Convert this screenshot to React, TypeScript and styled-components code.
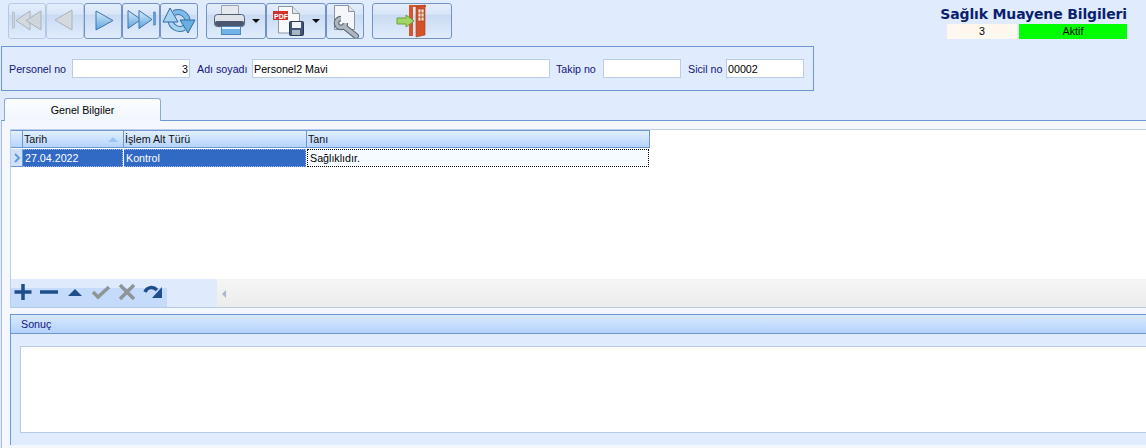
import React from 'react';
import styled, { createGlobalStyle } from 'styled-components';

const GlobalStyle = createGlobalStyle`
  html, body {
    margin: 0;
    padding: 0;
    background: #e0ecfe;
    overflow: hidden;
  }
  * {
    box-sizing: border-box;
  }
`;

const Page = styled.div`
  width: 1146px;
  height: 448px;
  overflow: hidden;
  display: flex;
  flex-direction: column;
  background: #e0ecfe;
  font-family: "Liberation Sans", "Noto Sans", sans-serif;
  font-size: 10.7px;
  color: #000;
`;

const TopBar = styled.div`
  height: 46px;
  flex: none;
  display: flex;
  justify-content: space-between;
  padding: 3px 19px 0 8px;
`;

const Toolbar = styled.div`
  display: flex;
  align-items: flex-start;
`;

const ToolButton = styled.button<{ $w: number; $off?: boolean; $gap?: number; $inner?: number }>`
  width: ${p => p.$w}px;
  height: 36px;
  margin: 0 0 0 ${p => p.$gap || 0}px;
  padding: 0;
  display: flex;
  align-items: center;
  justify-content: center;
  gap: ${p => p.$inner || 0}px;
  border: 1px solid ${p => (p.$off ? '#b5c8e4' : '#7293c2')};
  border-radius: 3px;
  background: linear-gradient(180deg, #e3edfc 0%, #d9e6f8 30%, #c9dbf3 33%, #d3e2f6 60%, #e0ecfd 100%);
`;

const Caret = styled.span`
  width: 0;
  height: 0;
  border-left: 4px solid transparent;
  border-right: 4px solid transparent;
  border-top: 4px solid #111;
`;

const TitleBlock = styled.div`
  width: 186px;
  display: flex;
  flex-direction: column;
  align-items: flex-end;
  margin-top: 1px;
`;

const Title = styled.div`
  width: 190px;
  font-size: 14px;
  line-height: 20px;
  font-weight: 700;
  font-family: "DejaVu Sans", sans-serif;
  color: #0b1f6f;
  white-space: nowrap;
  text-align: right;
  letter-spacing: -0.15px;
`;

const StatusRow = styled.div`
  display: flex;
  gap: 2px;
`;

const StatusCell = styled.div<{ $w: number; $bg: string }>`
  width: ${p => p.$w}px;
  height: 15px;
  line-height: 15px;
  text-align: center;
  background: ${p => p.$bg};
`;

const InfoPanel = styled.div`
  flex: none;
  width: 813px;
  height: 45px;
  margin-left: 1px;
  padding: 0 7px;
  display: flex;
  align-items: center;
  border: 1px solid #6c97d1;
`;

const FieldLabel = styled.label<{ $w: number; $pad?: number }>`
  width: ${p => p.$w}px;
  padding-left: ${p => p.$pad || 0}px;
  color: #14147a;
  white-space: nowrap;
`;

const FieldBox = styled.div<{ $w: number; $right?: boolean }>`
  width: ${p => p.$w}px;
  height: 19px;
  line-height: 18px;
  padding: 0 1px;
  background: #fff;
  border: 1px solid #b9cde8;
  text-align: ${p => (p.$right ? 'right' : 'left')};
  color: #000;
  white-space: nowrap;
`;

const TabStrip = styled.div`
  flex: none;
  height: 29px;
  padding: 6px 0 0 4px;
  display: flex;
  align-items: flex-end;
`;

const Tab = styled.div`
  width: 157px;
  height: 23px;
  line-height: 23px;
  text-align: center;
  border: 1px solid #8eaad2;
  border-bottom: none;
  border-radius: 3px 3px 0 0;
  background: linear-gradient(180deg, #fbfdff 0%, #f1f6fe 100%);
  margin-bottom: -1px;
  position: relative;
  z-index: 1;
`;

const TabBody = styled.div`
  flex: 1;
  margin-left: 1px;
  padding: 8px 0 0 8px;
  border-top: 1px solid #6c97d1;
  border-left: 1px solid #a9bce0;
  background: #f4f8fe;
  display: flex;
  flex-direction: column;
`;

const GridBox = styled.div`
  flex: none;
  height: 179px;
  background: #fff;
  border-top: 1px solid #bccde5;
  border-left: 1px solid #bccde5;
  border-bottom: 1px solid #b5c9e5;
  display: flex;
  flex-direction: column;
`;

const GridRows = styled.div`
  flex: 1;
`;

const GridRow = styled.div`
  display: flex;
  height: 18px;
`;

const DataRow = styled(GridRow)`
  margin-top: 1px;
`;

const Selector = styled.div<{ $head?: boolean }>`
  width: 12px;
  flex: none;
  display: flex;
  align-items: center;
  justify-content: center;
  border-right: 1px solid #6c97d1;
  border-bottom: 1px solid #6c97d1;
  background: ${p => (p.$head ? 'linear-gradient(180deg, #e2efff, #b5d4fd)' : '#cfe0f8')};
  border-top: ${p => (p.$head ? '1px solid #6c97d1' : 'none')};
`;

const HeadCell = styled.div<{ $w: number }>`
  width: ${p => p.$w}px;
  flex: none;
  display: flex;
  align-items: center;
  justify-content: space-between;
  padding: 0 5px 0 1px;
  border: 1px solid #6c97d1;
  border-left: none;
  background: linear-gradient(180deg, #e2efff, #b5d4fd);
  color: #111;
  line-height: 16px;
`;

const Cell = styled.div<{ $w: number; $focus?: boolean }>`
  width: ${p => p.$w}px;
  flex: none;
  padding: 0 1px 0 2px;
  margin-right: 1px;
  line-height: 16px;
  color: ${p => (p.$focus ? '#000' : '#fff')};
  background: ${p => (p.$focus ? '#f6fbff' : '#316ac5')};
  border: 1px dotted ${p => (p.$focus ? '#000' : '#9db8e6')};
  border-left-style: ${p => (p.$focus ? 'dotted' : 'none')};
`;

const SortArrow = styled.span`
  width: 0;
  height: 0;
  border-left: 5px solid transparent;
  border-right: 5px solid transparent;
  border-bottom: 5px solid #9cc4f2;
`;

const GridFooter = styled.div`
  flex: none;
  height: 28px;
  display: flex;
`;

const Navigator = styled.div`
  width: 156px;
  display: flex;
  align-items: center;
  padding: 0 0 3px 2px;
  gap: 6px;
  background: linear-gradient(180deg, #dfebfd 0, #dfebfd 9px, #c4dbfb 9px, #c4dbfb 100%);
`;

const FooterGap = styled.div`
  width: 50px;
  background: #dfebfd;
`;

const ScrollTrack = styled.div`
  flex: 1;
  padding-left: 5px;
  display: flex;
  align-items: center;
  border-top: 1px solid #f4f4f4;
  background: linear-gradient(180deg, #f5f5f5, #ececec);
`;

const ScrollArrow = styled.span`
  width: 0;
  height: 0;
  border-top: 4px solid transparent;
  border-bottom: 4px solid transparent;
  border-right: 4px solid #a8b8cf;
`;

const ResultPanel = styled.section`
  flex: none;
  margin-top: 6px;
  height: 131px;
  display: flex;
  flex-direction: column;
  background: #e0ecfe;
  border-top: 1px solid #6c97d1;
  border-left: 1px solid #6c9ae0;
`;

const ResultHead = styled.div`
  height: 19px;
  flex: none;
  padding-left: 10px;
  line-height: 18px;
  color: #14147a;
  background: linear-gradient(180deg, #dbeafe, #b3d2fc);
  border-bottom: 1px solid #6c97d1;
`;

const ResultBody = styled.div`
  flex: 1;
  padding: 12px 0 12px 9px;
`;

const ResultText = styled.div`
  height: 100%;
  background: #fff;
  border-top: 1px solid #b5c9e5;
  border-left: 1px solid #b5c9e5;
  border-bottom: 1px solid #b5c9e5;
`;

const FirstIcon = () => (
  <svg width="30" height="30" viewBox="0 0 30 30">
    <rect x="0.500" y="6" width="2" height="16" fill="#ccd2d8" stroke="#aeb6bd" strokeWidth="0.6" />
    <path d="M18 5v19L4 14.500z" fill="#d4d9de" stroke="#aab2ba" />
    <path d="M29 5v19L14 14.500z" fill="#cfd5da" stroke="#aab2ba" />
  </svg>
);

const PrevIcon = () => (
  <svg width="30" height="30" viewBox="0 0 30 30">
    <path d="M22 4v20L5 14z" fill="#d4d9de" stroke="#aab2ba" />
  </svg>
);

const NextIcon = () => (
  <svg width="30" height="30" viewBox="0 0 30 30">
    <defs>
      <linearGradient id="nav" x1="0" y1="0" x2="0" y2="1">
        <stop offset="0" stopColor="#d7ecfb" />
        <stop offset="1" stopColor="#5ea4dc" />
      </linearGradient>
    </defs>
    <path d="M8 5v19L25 14.500z" fill="url(#nav)" stroke="#3f74ad" />
  </svg>
);

const LastIcon = () => (
  <svg width="32" height="30" viewBox="0 0 32 30">
    <path d="M3 4.500v18L16 13.500z" fill="url(#nav)" stroke="#3f74ad" />
    <path d="M14 4.500v18L27 13.500z" fill="url(#nav)" stroke="#3f74ad" />
    <rect x="28.500" y="6" width="2" height="13" fill="#5ea4dc" stroke="#3f74ad" strokeWidth="0.5" />
  </svg>
);

const RefreshIcon = () => (
  <svg width="34" height="34" viewBox="0 0 34 34">
    <path d="M8.500 17A9.500 9.500 0 0 0 22 24" fill="none" stroke="#3b76ad" strokeWidth="6" />
    <path d="M8.500 17A9.500 9.500 0 0 0 22 24" fill="none" stroke="#a7d3f0" strokeWidth="4" />
    <path d="M25.500 16A9.500 9.500 0 0 0 12 9" fill="none" stroke="#3b76ad" strokeWidth="6" />
    <path d="M25.500 16A9.500 9.500 0 0 0 12 9" fill="none" stroke="#7dbce8" strokeWidth="4" />
    <path d="M8 4L1 18h15z" fill="#a7d3f0" stroke="#2f6aa3" />
    <path d="M26 29l-8-13h15z" fill="#68aee0" stroke="#2f6aa3" />
  </svg>
);

const PrinterIcon = () => (
  <svg width="35" height="32" viewBox="0 0 35 32">
    <path d="M9.500 0.500h17v12h-17z" fill="#e6e9ee" stroke="#9aa2ad" />
    <rect x="2.500" y="9.500" width="30" height="12" rx="3" fill="#dfe3e9" stroke="#4f5d72" />
    <rect x="3" y="16" width="29" height="5" rx="2" fill="#4a576e" />
    <rect x="9.500" y="21.500" width="19" height="8" fill="#6fb3e8" stroke="#4d86bb" />
    <rect x="10" y="22" width="18" height="2" fill="#e6f2fb" />
  </svg>
);

const PdfIcon = () => (
  <svg width="32" height="32" viewBox="0 0 32 32">
    <path d="M6.500 1.500h14l7 7v19.500h-21z" fill="#f8f9fb" stroke="#8a94a3" />
    <path d="M20.500 1.500v7h7" fill="#dfe4ea" stroke="#8a94a3" />
    <rect x="1" y="6" width="15" height="9" fill="#d0322c" />
    <text x="2" y="13.500" fontSize="7" fontWeight="700" fontFamily="Liberation Sans" fill="#fff">PDF</text>
    <rect x="17.500" y="16.500" width="14" height="14" rx="1" fill="#3f5477" stroke="#2a3a55" />
    <rect x="20" y="17" width="9" height="6" fill="#eef1f5" />
    <rect x="20" y="25" width="8" height="5" fill="#a9b4c5" />
  </svg>
);

const ToolsIcon = () => (
  <svg width="30" height="34" viewBox="0 0 30 34">
    <path d="M4.500 1.500h14l6 6v18h-20z" fill="#f4f6f9" stroke="#8a94a3" />
    <path d="M18.500 1.500v6h6" fill="#dfe4ea" stroke="#8a94a3" />
    <path d="M14 22.500L26 32" stroke="#59636f" strokeWidth="6" strokeLinecap="round" />
    <path d="M11 14.500A4.500 4.500 0 1 0 15.500 19" fill="none" stroke="#59636f" strokeWidth="5.500" />
    <path d="M11 14.500A4.500 4.500 0 1 0 15.500 19" fill="none" stroke="#aeb6c0" strokeWidth="3.500" />
    <path d="M14 22.500L26 32" stroke="#aeb6c0" strokeWidth="4" strokeLinecap="round" />
  </svg>
);

const ExitIcon = () => (
  <svg width="34" height="34" viewBox="0 0 34 34">
    <path d="M14 1h17v2H18v29h-4z" fill="#d4562a" />
    <path d="M21 3l9-2v30l-9 2z" fill="#d4512a" stroke="#a83a1b" strokeWidth="0.6" />
    <rect x="23" y="5" width="6" height="12" fill="#f3e3c4" stroke="#a83a1b" strokeWidth="0.6" />
    <path d="M23 9h6M23 13h6M26 5v12" stroke="#a83a1b" strokeWidth="0.8" />
    <path d="M2 14h9v-3l8 6-8 6v-3H2z" fill="#a0d662" stroke="#6ea03a" />
  </svg>
);

const PlusIcon = () => (
  <svg width="20" height="18" viewBox="0 0 20 18">
    <path d="M1.500 9h17M10 1v16" stroke="#1f4e8c" strokeWidth="3.500" />
  </svg>
);

const MinusIcon = () => (
  <svg width="20" height="18" viewBox="0 0 20 18">
    <path d="M1 9h18" stroke="#1f4e8c" strokeWidth="3.500" />
  </svg>
);

const UpIcon = () => (
  <svg width="20" height="18" viewBox="0 0 20 18">
    <path d="M3 13l7-7 7 7z" fill="#1f4e8c" />
  </svg>
);

const CheckIcon = () => (
  <svg width="20" height="18" viewBox="0 0 20 18">
    <path d="M2 9l5 5L18 4" fill="none" stroke="#8f9498" strokeWidth="3.500" />
  </svg>
);

const CrossIcon = () => (
  <svg width="20" height="18" viewBox="0 0 20 18">
    <path d="M3 2l14 14M17 2L3 16" stroke="#8f9498" strokeWidth="3.500" />
  </svg>
);

const RedoIcon = () => (
  <svg width="20" height="18" viewBox="0 0 20 18">
    <path d="M2 9c2-5 8-6 12-2" fill="none" stroke="#1f4e8c" strokeWidth="3.500" />
    <path d="M19 4v11H9z" fill="#1f4e8c" />
  </svg>
);

const RowPointer = () => (
  <svg width="8" height="10" viewBox="0 0 8 10">
    <path d="M2 1l4 4-4 4" fill="none" stroke="#5f9bd8" strokeWidth="2" />
  </svg>
);

export default function App() {
  return (
    <Page>
      <GlobalStyle />
      <TopBar>
        <Toolbar>
          <ToolButton $w={38} $off><FirstIcon /></ToolButton>
          <ToolButton $w={38} $off><PrevIcon /></ToolButton>
          <ToolButton $w={38}><NextIcon /></ToolButton>
          <ToolButton $w={38}><LastIcon /></ToolButton>
          <ToolButton $w={38}><RefreshIcon /></ToolButton>
          <ToolButton $w={60} $gap={8} $inner={5}><PrinterIcon /><Caret /></ToolButton>
          <ToolButton $w={60} $inner={8}><PdfIcon /><Caret /></ToolButton>
          <ToolButton $w={38}><ToolsIcon /></ToolButton>
          <ToolButton $w={80} $gap={8}><ExitIcon /></ToolButton>
        </Toolbar>
        <TitleBlock>
          <Title>Sağlık Muayene Bilgileri</Title>
          <StatusRow>
            <StatusCell $w={70} $bg="#fff8ee">3</StatusCell>
            <StatusCell $w={108} $bg="#00ff00">Aktif</StatusCell>
          </StatusRow>
        </TitleBlock>
      </TopBar>

      <InfoPanel>
        <FieldLabel $w={63}>Personel no</FieldLabel>
        <FieldBox $w={118} $right>3</FieldBox>
        <FieldLabel $w={62} $pad={7}>Adı soyadı</FieldLabel>
        <FieldBox $w={298}>Personel2 Mavi</FieldBox>
        <FieldLabel $w={53} $pad={6}>Takip no</FieldLabel>
        <FieldBox $w={78} />
        <FieldLabel $w={45} $pad={7}>Sicil no</FieldLabel>
        <FieldBox $w={78}>00002</FieldBox>
      </InfoPanel>

      <TabStrip>
        <Tab>Genel Bilgiler</Tab>
      </TabStrip>

      <TabBody>
        <GridBox>
          <GridRows>
            <GridRow>
              <Selector $head />
              <HeadCell $w={101}>Tarih<SortArrow /></HeadCell>
              <HeadCell $w={183}>İşlem Alt Türü</HeadCell>
              <HeadCell $w={343}>Tanı</HeadCell>
            </GridRow>
            <DataRow>
              <Selector><RowPointer /></Selector>
              <Cell $w={100}>27.04.2022</Cell>
              <Cell $w={182}>Kontrol</Cell>
              <Cell $w={342} $focus>Sağlıklıdır.</Cell>
            </DataRow>
          </GridRows>
          <GridFooter>
            <Navigator>
              <PlusIcon />
              <MinusIcon />
              <UpIcon />
              <CheckIcon />
              <CrossIcon />
              <RedoIcon />
            </Navigator>
            <FooterGap />
            <ScrollTrack><ScrollArrow /></ScrollTrack>
          </GridFooter>
        </GridBox>

        <ResultPanel>
          <ResultHead>Sonuç</ResultHead>
          <ResultBody>
            <ResultText />
          </ResultBody>
        </ResultPanel>
      </TabBody>
    </Page>
  );
}
